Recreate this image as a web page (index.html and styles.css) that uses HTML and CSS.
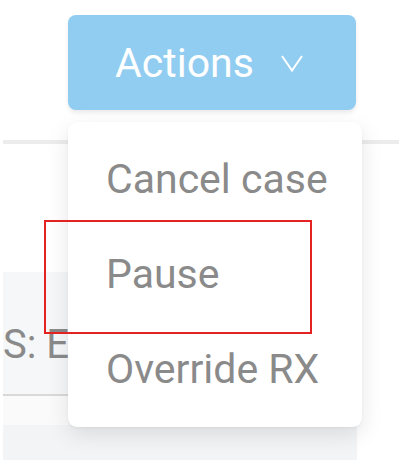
FILE: index.html
```html
<!DOCTYPE html>
<html lang="en">
<head>
    <meta charset="UTF-8">
    <meta name="viewport" content="width=device-width, initial-scale=1.0">
    <title>Case Actions</title>
    <link rel="stylesheet" href="styles.css">
</head>
<body>
    <div class="page">
        <div class="toolbar">
            <div class="actions">
                <button class="actions-button">
                    <span>Actions</span>
                    <svg class="chevron" width="22" height="17" viewBox="0 0 22 17">
                        <polyline points="1,1 11,15.5 21,1" fill="none" stroke="#fff" stroke-width="2"/>
                    </svg>
                </button>
                <ul class="actions-menu">
                    <li>Cancel case</li>
                    <li>Pause</li>
                    <li>Override RX</li>
                </ul>
            </div>
        </div>

        <div class="divider"></div>

        <div class="case-panel">
            <div class="case-field">
                <p class="case-status">S: Escalated</p>
            </div>
            <div class="case-gap"></div>
            <div class="case-footer"></div>
        </div>

        <div class="highlight"></div>
    </div>
</body>
</html>
```

FILE: styles.css
```css
body {
    margin: 0;
    font-family: 'Roboto', 'Liberation Sans', sans-serif;
    background: #fff;
}

.page {
    position: relative;
    width: 404px;
    height: 470px;
    overflow: hidden;
}

.toolbar {
    padding: 15px 0 0 68px;
    height: 140px;
    box-sizing: border-box;
}

.actions {
    position: relative;
    width: 288px;
}

.actions-button {
    display: flex;
    align-items: center;
    justify-content: center;
    gap: 27px;
    width: 288px;
    height: 95px;
    padding: 0 6px 0 0;
    border: none;
    border-radius: 8px;
    background: #91cdf1;
    color: #fff;
    font-family: inherit;
    font-size: 41px;
    box-shadow: 0 3px 4px rgba(0, 0, 0, 0.08);
}

.chevron {
    margin-top: 2px;
}

.actions-menu {
    position: absolute;
    top: 107px;
    left: 0;
    z-index: 2;
    width: 294px;
    margin: 0;
    padding: 10px 0;
    list-style: none;
    background: #fff;
    border-radius: 9px;
    box-shadow: 0 8px 22px rgba(0, 0, 0, 0.1), 0 1px 3px rgba(0, 0, 0, 0.05);
}

.actions-menu li {
    height: 95px;
    line-height: 95px;
    padding-left: 38px;
    font-size: 41px;
    color: #8a8a8a;
}

.divider {
    height: 4px;
    margin: 0 5px 0 3px;
    background: #ececec;
}

.case-panel {
    margin: 128px 47px 0 3px;
}

.case-field {
    height: 124px;
    padding-top: 49px;
    box-sizing: border-box;
    background: #f6f7f8;
    border-bottom: 2px solid #d9d9d9;
}

/* the rest of the value sits under the open menu */
.case-status {
    width: 65px;
    margin: 0;
    overflow: hidden;
    font-size: 40px;
    color: #8a8a8a;
    white-space: nowrap;
}

.case-gap {
    height: 29px;
    background: #fafafb;
}

.case-footer {
    height: 35px;
    background: #f3f4f6;
}

.highlight {
    position: absolute;
    top: 220px;
    left: 44px;
    z-index: 3;
    width: 264px;
    height: 110px;
    border: 2px solid #e42222;
}
```
